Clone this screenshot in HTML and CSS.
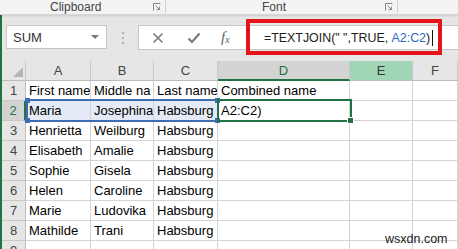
FILE: index.html
```html
<!DOCTYPE html>
<html>
<head>
<meta charset="utf-8">
<link rel="stylesheet" href="styles.css">
</head>
<body>
<div class="app">
  <div class="ribbon">
    <div class="group g-clip">
      <span class="glabel">Clipboard</span>
      <span class="launcher"><svg width="8" height="8" viewBox="0 0 8 8"><path d="M0.5 7.5V0.5H7.5" fill="none" stroke="#8a8a8a" stroke-width="1"/><path d="M2.5 2.5L6.5 6.5M3.5 6.5H6.5V3.5" fill="none" stroke="#8a8a8a" stroke-width="1"/></svg></span>
    </div>
    <div class="group g-font">
      <span class="glabel">Font</span>
      <span class="launcher"><svg width="8" height="8" viewBox="0 0 8 8"><path d="M0.5 7.5V0.5H7.5" fill="none" stroke="#8a8a8a" stroke-width="1"/><path d="M2.5 2.5L6.5 6.5M3.5 6.5H6.5V3.5" fill="none" stroke="#8a8a8a" stroke-width="1"/></svg></span>
    </div>
  </div>
  <div class="fbar">
    <div class="namebox">
      <span class="nb-text">SUM</span>
      <span class="nb-arrow"></span>
    </div>
    <div class="grip"><i></i><i></i><i></i></div>
    <div class="fxbox">
      <div class="fxbtns">
        <svg class="btn-x" width="12" height="12" viewBox="0 0 12 12"><path d="M1.5 1.5L10.5 10.5M10.5 1.5L1.5 10.5" stroke="#7a7a7a" stroke-width="1.6"/></svg>
        <svg class="btn-ok" width="14" height="12" viewBox="0 0 14 12"><path d="M1.5 6.5L5 10L12.5 1.5" fill="none" stroke="#7a7a7a" stroke-width="2.2"/></svg>
        <span class="btn-fx">f<sub>x</sub></span>
      </div>
      <div class="finput">=TEXTJOIN(" ",TRUE, <span class="ref">A2:C2</span>)<span class="caret"></span></div>
    </div>
  </div>
  <div class="sheet">
    <div class="corner"><span class="tri"></span></div>
    <div class="ch">A</div><div class="ch">B</div><div class="ch">C</div><div class="ch ch-active">D</div><div class="ch ch-hover">E</div><div class="ch">F</div>

    <div class="rh">1</div><div class="c">First name</div><div class="c">Middle na</div><div class="c">Last name</div><div class="c">Combined name</div><div class="c"></div><div class="c"></div>
    <div class="rh rh-active">2</div><div class="c sel">Maria</div><div class="c sel">Josephina</div><div class="c sel">Habsburg</div><div class="c">A2:C2)</div><div class="c"></div><div class="c"></div>
    <div class="rh">3</div><div class="c">Henrietta</div><div class="c">Weilburg</div><div class="c">Habsburg</div><div class="c"></div><div class="c"></div><div class="c"></div>
    <div class="rh">4</div><div class="c">Elisabeth</div><div class="c">Amalie</div><div class="c">Habsburg</div><div class="c"></div><div class="c"></div><div class="c"></div>
    <div class="rh">5</div><div class="c">Sophie</div><div class="c">Gisela</div><div class="c">Habsburg</div><div class="c"></div><div class="c"></div><div class="c"></div>
    <div class="rh">6</div><div class="c">Helen</div><div class="c">Caroline</div><div class="c">Habsburg</div><div class="c"></div><div class="c"></div><div class="c"></div>
    <div class="rh">7</div><div class="c">Marie</div><div class="c">Ludovika</div><div class="c">Habsburg</div><div class="c"></div><div class="c"></div><div class="c"></div>
    <div class="rh">8</div><div class="c">Mathilde</div><div class="c">Trani</div><div class="c">Habsburg</div><div class="c"></div><div class="c"></div><div class="c"></div>
    <div class="rh">9</div><div class="c"></div><div class="c"></div><div class="c"></div><div class="c"></div><div class="c"></div><div class="c"></div>

    <div class="range"><i class="h tl"></i><i class="h tr"></i><i class="h bl"></i><i class="h br"></i></div>
    <div class="active"><i class="fill"></i></div>
  </div>
  <div class="redbox"></div>
  <div class="watermark">wsxdn.com</div>
</div>
</body>
</html>
```

FILE: styles.css
```css
* { box-sizing: border-box; }
html, body { margin: 0; padding: 0; }
body {
  width: 458px;
  height: 249px;
  overflow: hidden;
  font-family: "Liberation Sans", Arial, sans-serif;
  background: #fff;
}
.app {
  position: relative;
  width: 458px;
  height: 249px;
  overflow: hidden;
}
.ribbon {
  display: flex;
  height: 15px;
  background: #f3f3f3;
  border-bottom: 1px solid #d6d6d6;
  box-shadow: 0 1px 2px rgba(0,0,0,0.12);
  position: relative;
  z-index: 1;
}
.group {
  display: flex;
  align-items: flex-start;
  border-right: 1px solid #d2d2d2;
  height: 13px;
}
.g-clip { width: 166px; }
.g-font { width: 232px; }
.glabel {
  font-size: 12px;
  line-height: 14px;
  color: #444;
  margin-top: 0;
}
.g-clip .glabel { margin-left: 50px; }
.g-font .glabel { margin-left: 96px; }
.launcher {
  margin-left: auto;
  margin-right: 4px;
  margin-top: 3px;
  display: flex;
}
.fbar {
  display: flex;
  align-items: flex-start;
  height: 46px;
  background: #e6e6e6;
  border-left: 2px solid #217346;
  padding: 10px 0 0 4px;
}
.namebox {
  width: 101px;
  height: 24px;
  background: #fff;
  border: 1px solid #c6c6c6;
  display: flex;
  align-items: center;
  padding-left: 6px;
}
.nb-text {
  font-size: 13px;
  color: #333;
}
.nb-arrow {
  margin-left: auto;
  margin-right: 7px;
  width: 0;
  height: 0;
  border-left: 4px solid transparent;
  border-right: 4px solid transparent;
  border-top: 4px solid #777;
}
.grip {
  display: flex;
  flex-direction: column;
  gap: 3px;
  margin: 7px 14px 0 15px;
}
.grip i {
  display: block;
  width: 2px;
  height: 2px;
  background: #b0b0b0;
}
.fxbox {
  flex: 1;
  display: flex;
  height: 25px;
  background: #fff;
  border: 1px solid #c6c6c6;
  border-right: none;
}
.fxbtns {
  display: flex;
  align-items: center;
  width: 110px;
  padding-left: 13px;
}
.btn-x { margin-right: 23px; }
.btn-ok { margin-right: 20px; }
.btn-fx {
  font-family: "Liberation Serif", serif;
  font-style: italic;
  font-size: 15px;
  color: #666;
  line-height: 1;
}
.btn-fx sub {
  font-size: 10px;
  vertical-align: -1px;
}
.finput {
  display: flex;
  align-items: center;
  padding-left: 15px;
  font-size: 12.4px;
  color: #222;
  white-space: pre;
}
.ref { color: #2e68bf; }
.caret {
  display: inline-block;
  width: 1px;
  height: 16px;
  background: #111;
  margin-left: 2px;
}
.sheet {
  position: relative;
  display: grid;
  grid-template-columns: 24px 65px 63px 64px 132px 63px 1fr;
  grid-auto-rows: 20px;
  border-left: 2px solid #217346;
  background: #fff;
}
.corner {
  background: #e6e6e6;
  border-right: 1px solid #c6c6c6;
  border-bottom: 1px solid #bdbdbd;
  position: relative;
}
.tri {
  position: absolute;
  right: 2px;
  bottom: 3px;
  width: 0;
  height: 0;
  border-left: 10px solid transparent;
  border-bottom: 10px solid #b5b5b5;
}
.ch {
  background: #e6e6e6;
  border-right: 1px solid #c8c8c8;
  border-bottom: 1px solid #bdbdbd;
  font-size: 13px;
  color: #444;
  text-align: center;
  line-height: 19px;
}
.ch-active {
  background: #d3d3d3;
  border-bottom: 2px solid #217346;
  color: #217346;
}
.ch-hover {
  background: #a0d6b6;
  color: #333;
}
.rh {
  background: #e6e6e6;
  border-right: 1px solid #bdbdbd;
  border-bottom: 1px solid #c8c8c8;
  font-size: 13px;
  color: #444;
  text-align: center;
  line-height: 20px;
}
.rh-active {
  background: #d3d3d3;
  border-right: 2px solid #217346;
  color: #217346;
}
.c {
  border-right: 1px solid #d4d4d4;
  border-bottom: 1px solid #d4d4d4;
  font-size: 13px;
  color: #000;
  line-height: 20px;
  padding-left: 3px;
  white-space: nowrap;
  overflow: hidden;
}
.sel { background: #e4ebf6; }
.range {
  position: absolute;
  left: 24px;
  top: 38px;
  width: 193px;
  height: 23px;
  border: 2px solid #3f6db4;
  pointer-events: none;
}
.h {
  position: absolute;
  width: 5px;
  height: 5px;
  background: #3f6db4;
}
.tl { left: -3px; top: -3px; }
.tr { right: -3px; top: -3px; }
.bl { left: -3px; bottom: -3px; }
.br { right: -3px; bottom: -3px; }
.active {
  position: absolute;
  left: 215px;
  top: 38px;
  width: 135px;
  height: 23px;
  border: 2px solid #217346;
}
.fill {
  position: absolute;
  right: -4px;
  bottom: -4px;
  width: 5px;
  height: 5px;
  background: #217346;
  border: 1px solid #fff;
  box-sizing: content-box;
}
.redbox {
  position: absolute;
  left: 246px;
  top: 19px;
  width: 196px;
  height: 36px;
  border: 4px solid #e3141c;
}
.watermark {
  position: absolute;
  left: 385px;
  top: 232px;
  font-size: 12.5px;
  color: #222;
}
```
